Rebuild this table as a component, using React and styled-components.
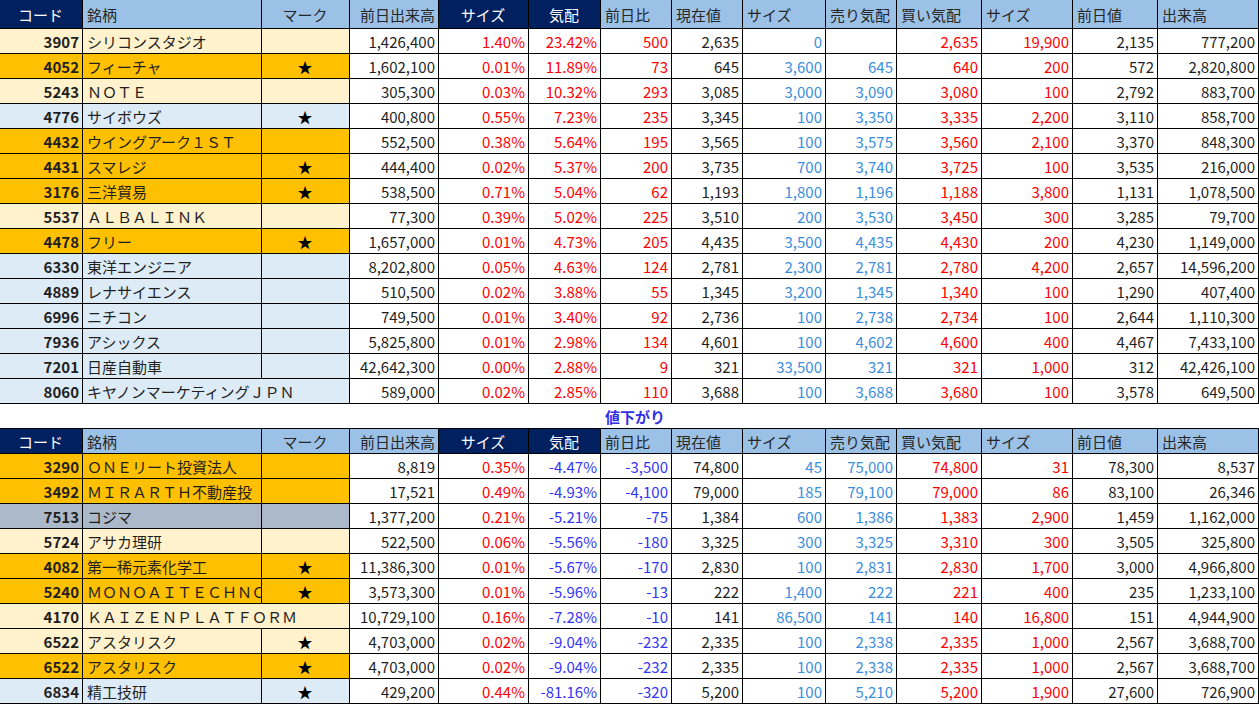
import React from "react";
import styled, { createGlobalStyle, css } from "styled-components";

const GlobalStyle = createGlobalStyle`
  html, body { margin: 0; padding: 0; background: #ffffff; }
  body {
    font-family: "Noto Sans CJK JP", "Noto Sans", sans-serif;
    font-size: 15px;
    color: #222222;
  }
`;

const COLS =
  "83px 179px 88px 89px 90px 72px 71px 71px 83px 71px 85px 91px 85px 101px";

const BG = {
  cream: "#FFF2CC",
  orange: "#FFC000",
  blue: "#DDEBF7",
  gray: "#ACB9CA",
};

const TEXT = {
  black: "#1f1f1f",
  red: "#FF0000",
  sky: "#3A8EDE",
  neg: "#3434F5",
};

const Sheet = styled.div`
  width: 1259px;
  display: flex;
  flex-direction: column;
`;

const Row = styled.div`
  display: grid;
  grid-template-columns: ${COLS};
  height: ${(p) => p.$h || 25}px;
  ${(p) =>
    p.$topLine &&
    css`
      border-top: 1px solid #000;
    `}
  box-sizing: border-box;
`;

const Cell = styled.div`
  box-sizing: border-box;
  border-right: 1px solid #000;
  border-bottom: 1px solid #000;
  display: flex;
  align-items: center;
  justify-content: ${(p) =>
    p.$align === "left" ? "flex-start" : p.$align === "center" ? "center" : "flex-end"};
  padding: 0 ${(p) => (p.$align === "right" ? "3px" : "4px")} 0
    ${(p) => (p.$align === "left" ? "4px" : "3px")};
  white-space: nowrap;
  overflow: hidden;
  line-height: 1;
  background: ${(p) => p.$bg || "#ffffff"};
  color: ${(p) => p.$color || TEXT.black};
  ${(p) =>
    p.$span &&
    css`
      grid-column: span ${p.$span};
    `}
`;

const HeadCell = styled(Cell)`
  background: ${(p) => (p.$navy ? "#002060" : "#9BC2E6")};
  color: ${(p) => (p.$navy ? "#ffffff" : "#262626")};
`;

const CodeCell = styled(Cell)`
  font-weight: 700;
  padding-right: 3px;
`;

const NameCell = styled(Cell)`
  justify-content: flex-start;
  padding-left: 4px;
`;

const MarkCell = styled(Cell)`
  justify-content: center;
  color: #000;
`;

const LabelRow = styled.div`
  display: grid;
  grid-template-columns: ${COLS};
  height: 24px;
  align-items: center;
`;

const Label = styled.div`
  grid-column: 7 / span 3;
  padding-left: 4px;
  font-weight: 700;
  color: #3030E8;
  line-height: 1;
`;

const HEAD = [
  { t: "コード", a: "center", navy: true },
  { t: "銘柄", a: "left" },
  { t: "マーク", a: "center" },
  { t: "前日出来高", a: "right" },
  { t: "サイズ", a: "center", navy: true },
  { t: "気配", a: "center", navy: true },
  { t: "前日比", a: "left" },
  { t: "現在値", a: "left" },
  { t: "サイズ", a: "left" },
  { t: "売り気配", a: "left" },
  { t: "買い気配", a: "left" },
  { t: "サイズ", a: "left" },
  { t: "前日値", a: "left" },
  { t: "出来高", a: "left" },
];

// columns from index 3: prevVol, size%, kehai, change, price, size, sell, buy, size2, prevClose, volume
const COLTONE = ["black", "red", "sign", "sign", "black", "sky", "sky", "red", "red", "black", "black"];

const UP = [
  ["3907", "シリコンスタジオ", "", "cream", "1,426,400", "1.40%", "23.42%", "500", "2,635", "0", "", "2,635", "19,900", "2,135", "777,200"],
  ["4052", "フィーチャ", "★", "orange", "1,602,100", "0.01%", "11.89%", "73", "645", "3,600", "645", "640", "200", "572", "2,820,800"],
  ["5243", "ＮＯＴＥ", "", "cream", "305,300", "0.03%", "10.32%", "293", "3,085", "3,000", "3,090", "3,080", "100", "2,792", "883,700"],
  ["4776", "サイボウズ", "★", "blue", "400,800", "0.55%", "7.23%", "235", "3,345", "100", "3,350", "3,335", "2,200", "3,110", "858,700"],
  ["4432", "ウイングアーク１ＳＴ", "", "orange", "552,500", "0.38%", "5.64%", "195", "3,565", "100", "3,575", "3,560", "2,100", "3,370", "848,300"],
  ["4431", "スマレジ", "★", "orange", "444,400", "0.02%", "5.37%", "200", "3,735", "700", "3,740", "3,725", "100", "3,535", "216,000"],
  ["3176", "三洋貿易", "★", "orange", "538,500", "0.71%", "5.04%", "62", "1,193", "1,800", "1,196", "1,188", "3,800", "1,131", "1,078,500"],
  ["5537", "ＡＬＢＡＬＩＮＫ", "", "cream", "77,300", "0.39%", "5.02%", "225", "3,510", "200", "3,530", "3,450", "300", "3,285", "79,700"],
  ["4478", "フリー", "★", "orange", "1,657,000", "0.01%", "4.73%", "205", "4,435", "3,500", "4,435", "4,430", "200", "4,230", "1,149,000"],
  ["6330", "東洋エンジニア", "", "blue", "8,202,800", "0.05%", "4.63%", "124", "2,781", "2,300", "2,781", "2,780", "4,200", "2,657", "14,596,200"],
  ["4889", "レナサイエンス", "", "blue", "510,500", "0.02%", "3.88%", "55", "1,345", "3,200", "1,345", "1,340", "100", "1,290", "407,400"],
  ["6996", "ニチコン", "", "blue", "749,500", "0.01%", "3.40%", "92", "2,736", "100", "2,738", "2,734", "100", "2,644", "1,110,300"],
  ["7936", "アシックス", "", "blue", "5,825,800", "0.01%", "2.98%", "134", "4,601", "100", "4,602", "4,600", "400", "4,467", "7,433,100"],
  ["7201", "日産自動車", "", "blue", "42,642,300", "0.00%", "2.88%", "9", "321", "33,500", "321", "321", "1,000", "312", "42,426,100"],
  ["8060", "キヤノンマーケティングＪＰＮ", "", "blue", "589,000", "0.02%", "2.85%", "110", "3,688", "100", "3,688", "3,680", "100", "3,578", "649,500", true],
];

const DOWN = [
  ["3290", "ＯＮＥリート投資法人", "", "orange", "8,819", "0.35%", "-4.47%", "-3,500", "74,800", "45", "75,000", "74,800", "31", "78,300", "8,537"],
  ["3492", "ＭＩＲＡＲＴＨ不動産投", "", "orange", "17,521", "0.49%", "-4.93%", "-4,100", "79,000", "185", "79,100", "79,000", "86", "83,100", "26,346"],
  ["7513", "コジマ", "", "gray", "1,377,200", "0.21%", "-5.21%", "-75", "1,384", "600", "1,386", "1,383", "2,900", "1,459", "1,162,000"],
  ["5724", "アサカ理研", "", "cream", "522,500", "0.06%", "-5.56%", "-180", "3,325", "300", "3,325", "3,310", "300", "3,505", "325,800"],
  ["4082", "第一稀元素化学工", "★", "orange", "11,386,300", "0.01%", "-5.67%", "-170", "2,830", "100", "2,831", "2,830", "1,700", "3,000", "4,966,800"],
  ["5240", "ＭＯＮＯＡＩＴＥＣＨＮＯ", "★", "orange", "3,573,300", "0.01%", "-5.96%", "-13", "222", "1,400", "222", "221", "400", "235", "1,233,100"],
  ["4170", "ＫＡＩＺＥＮＰＬＡＴＦＯＲＭ", "", "cream", "10,729,100", "0.16%", "-7.28%", "-10", "141", "86,500", "141", "140", "16,800", "151", "4,944,900", true],
  ["6522", "アスタリスク", "★", "cream", "4,703,000", "0.02%", "-9.04%", "-232", "2,335", "100", "2,338", "2,335", "1,000", "2,567", "3,688,700"],
  ["6522", "アスタリスク", "★", "orange", "4,703,000", "0.02%", "-9.04%", "-232", "2,335", "100", "2,338", "2,335", "1,000", "2,567", "3,688,700"],
  ["6834", "精工技研", "★", "blue", "429,200", "0.44%", "-81.16%", "-320", "5,200", "100", "5,210", "5,200", "1,900", "27,600", "726,900"],
];

function toneColor(tone, value) {
  if (tone === "sign") return value.startsWith("-") ? TEXT.neg : TEXT.red;
  return TEXT[tone];
}

function HeaderRow({ height, topLine }) {
  return (
    <Row $h={height} $topLine={topLine}>
      {HEAD.map((h, i) => (
        <HeadCell key={i} $align={h.a} $navy={h.navy}>
          {h.t}
        </HeadCell>
      ))}
    </Row>
  );
}

function StockRow({ data }) {
  const [code, name, mark, bg, ...rest] = data;
  const values = rest.slice(0, 11);
  const overflow = rest[11] === true;
  const tint = BG[bg];
  return (
    <Row>
      <CodeCell $align="right" $bg={tint}>
        {code}
      </CodeCell>
      <NameCell $align="left" $bg={tint} $span={overflow ? 2 : undefined}>
        {name}
      </NameCell>
      {!overflow && (
        <MarkCell $align="center" $bg={tint}>
          {mark}
        </MarkCell>
      )}
      {values.map((v, i) => (
        <Cell key={i} $align="right" $color={toneColor(COLTONE[i], v)}>
          {v}
        </Cell>
      ))}
    </Row>
  );
}

export default function App() {
  return (
    <>
      <GlobalStyle />
      <Sheet>
        <HeaderRow height={29} />
        {UP.map((r, i) => (
          <StockRow key={"u" + i} data={r} />
        ))}
        <LabelRow>
          <Label>値下がり</Label>
        </LabelRow>
        <HeaderRow height={26} topLine />
        {DOWN.map((r, i) => (
          <StockRow key={"d" + i} data={r} />
        ))}
      </Sheet>
    </>
  );
}
